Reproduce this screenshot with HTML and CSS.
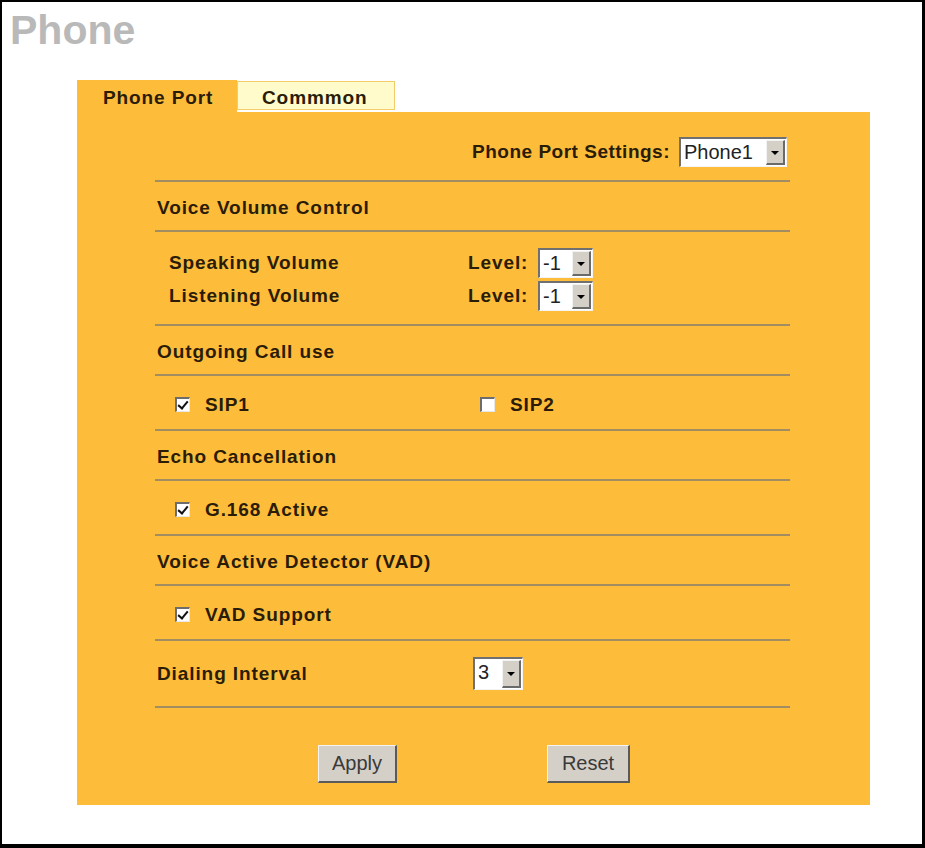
FILE: index.html
```html
<!DOCTYPE html>
<html lang="en">
    <head>
        <meta charset="UTF-8">
        <title>Phone</title>
        <link rel="stylesheet" href="styles.css">
    </head>
    <body>
        <div class="frame">
            <h1 class="title">Phone</h1>
            <div class="panel">
                <div class="tabs">
                    <div class="tab active">Phone Port</div>
                    <div class="tab other">Commmon</div>
                </div>
                <div class="body">
                    <div class="form">
                        <div class="row settings">
                            <span class="label">Phone Port Settings:</span>
                            <span class="select wide"><span class="val">Phone1</span><span class="arrow"></span></span>
                        </div>
                        <div class="row head">Voice Volume Control</div>
                        <div class="row volume">
                            <div class="line">
                                <span class="item">Speaking Volume</span>
                                <span class="level">Level:</span>
                                <span class="select small"><span class="val">-1</span><span class="arrow"></span></span>
                            </div>
                            <div class="line">
                                <span class="item">Listening Volume</span>
                                <span class="level">Level:</span>
                                <span class="select small"><span class="val">-1</span><span class="arrow"></span></span>
                            </div>
                        </div>
                        <div class="row head">Outgoing Call use</div>
                        <div class="row checks">
                            <label class="check first"><span class="box on"></span>SIP1</label>
                            <label class="check"><span class="box"></span>SIP2</label>
                        </div>
                        <div class="row head">Echo Cancellation</div>
                        <div class="row checks">
                            <label class="check"><span class="box on"></span>G.168 Active</label>
                        </div>
                        <div class="row head">Voice Active Detector (VAD)</div>
                        <div class="row checks">
                            <label class="check"><span class="box on"></span>VAD Support</label>
                        </div>
                        <div class="row dialing">
                            <span class="dlabel">Dialing Interval</span>
                            <span class="select tiny"><span class="val">3</span><span class="arrow"></span></span>
                        </div>
                    </div>
                    <div class="buttons">
                        <button class="btn apply">Apply</button>
                        <button class="btn reset">Reset</button>
                    </div>
                </div>
            </div>
        </div>
    </body>
</html>
```

FILE: styles.css
```css
*{
    margin: 0;
    padding: 0;
    box-sizing: border-box;
}
body{
    background-color: #fff;
    font-family: "Liberation Sans", Arial, sans-serif;
}
.frame{
    width: 925px;
    height: 848px;
    border-style: solid;
    border-color: #000;
    border-width: 2px 3px 4px 2px;
    padding: 5px 0 0 75px;
}
.title{
    margin-left: -67px;
    font-size: 41px;
    line-height: 46px;
    font-weight: bold;
    color: #b9b9b9;
}
.panel{
    margin-top: 27px;
    width: 793px;
    color: #2a1c06;
    font-size: 19px;
    font-weight: bold;
    letter-spacing: 0.9px;
}
.tabs{
    display: flex;
    height: 32px;
}
.tab{
    height: 32px;
    line-height: 35px;
}
.tab.active{
    width: 160px;
    padding-left: 26px;
    background-color: #fdbd3b;
}
.tab.other{
    width: 158px;
    height: 29px;
    margin-top: 1px;
    line-height: 31px;
    padding-left: 24px;
    background-color: #fffbca;
    border: 1px solid #f3cd6a;
}
.body{
    background-color: #fdbd3b;
    padding: 18px 80px 22px 78px;
}
.row{
    display: flex;
    align-items: center;
    border-bottom: 2px solid #a28c62;
}
.settings{
    height: 52px;
    justify-content: flex-end;
    padding-right: 3px;
    padding-bottom: 6px;
}
.settings .label{
    margin-right: 9px;
    letter-spacing: 0.5px;
}
.head{
    height: 50px;
    padding-left: 2px;
    padding-top: 4px;
}
.volume{
    flex-direction: column;
    align-items: stretch;
    height: 94px;
    padding: 14px 0 12px 14px;
}
.line{
    display: flex;
    align-items: center;
    height: 33px;
}
.item{
    width: 299px;
}
.level{
    width: 70px;
}
.checks{
    height: 55px;
    padding-left: 20px;
    padding-top: 4px;
}
.check{
    display: flex;
    align-items: center;
}
.check.first{
    width: 305px;
}
.box{
    width: 15px;
    height: 15px;
    margin-right: 15px;
    background-color: #fff;
    border-style: solid;
    border-width: 2px 1px 1px 2px;
    border-color: #6d6d6d #e8e8e8 #e8e8e8 #6d6d6d;
    position: relative;
}
.box.on::after{
    content: "";
    position: absolute;
    left: 3px;
    top: 0px;
    width: 4px;
    height: 8px;
    border-right: 2px solid #111;
    border-bottom: 2px solid #111;
    transform: rotate(40deg);
}
.dialing{
    height: 67px;
    padding-left: 2px;
}
.dlabel{
    width: 316px;
}
.select{
    display: flex;
    align-items: stretch;
    height: 30px;
    background-color: #fff;
    border-style: solid;
    border-width: 2px 1px 1px 2px;
    border-color: #707070 #f4f4f4 #f4f4f4 #707070;
    font-size: 20px;
    font-weight: normal;
    letter-spacing: 0;
    color: #222;
}
.select .val{
    flex: 1;
    padding-left: 3px;
    line-height: 26px;
}
.select .arrow{
    width: 19px;
    margin: 1px;
    background-color: #d4d0c8;
    border-style: solid;
    border-width: 1px 2px 2px 1px;
    border-color: #f2f2f2 #6a6a6a #6a6a6a #f2f2f2;
    position: relative;
}
.select .arrow::after{
    content: "";
    position: absolute;
    left: 4px;
    top: 10px;
    border-left: 4px solid transparent;
    border-right: 4px solid transparent;
    border-top: 4px solid #000;
}
.select.wide{
    width: 108px;
}
.select.small{
    width: 55px;
}
.select.tiny{
    width: 50px;
    height: 33px;
}
.select.tiny .arrow::after{
    top: 11px;
}
.buttons{
    display: flex;
    justify-content: center;
    gap: 150px;
    padding-top: 37px;
    padding-left: 3px;
}
.btn{
    height: 38px;
    font-family: "Liberation Sans", Arial, sans-serif;
    font-size: 20px;
    color: #3a3a3a;
    background-color: #d4d0c8;
    border-style: solid;
    border-width: 1px 2px 2px 1px;
    border-color: #f4f4f4 #5a5a5a #5a5a5a #f4f4f4;
}
.apply{
    width: 79px;
}
.reset{
    width: 83px;
}
```
